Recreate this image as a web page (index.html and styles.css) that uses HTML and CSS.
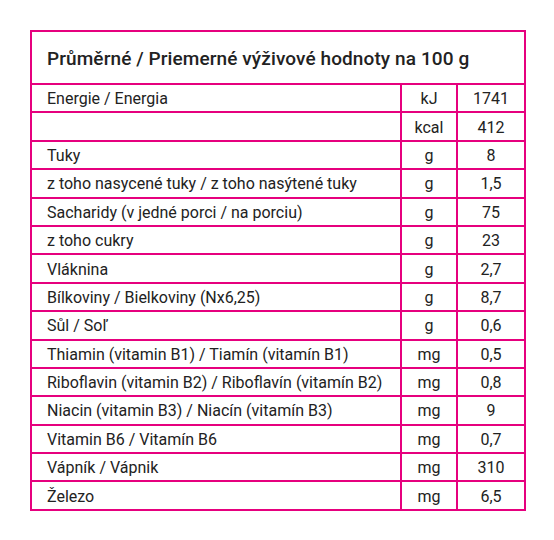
FILE: index.html
```html
<!DOCTYPE html>
<html lang="cs">
<head>
<meta charset="utf-8">
<title>Výživové hodnoty</title>
<link rel="stylesheet" href="styles.css">
</head>
<body>
<table class="nutri">
  <colgroup>
    <col class="c-name">
    <col class="c-unit">
    <col class="c-val">
  </colgroup>
  <thead>
    <tr class="head"><th colspan="3">Průměrné / Priemerné výživové hodnoty na 100 g</th></tr>
  </thead>
  <tbody>
    <tr><td class="name">Energie / Energia</td><td class="unit">kJ</td><td class="val">1741</td></tr>
    <tr><td class="name"></td><td class="unit">kcal</td><td class="val">412</td></tr>
    <tr><td class="name">Tuky</td><td class="unit">g</td><td class="val">8</td></tr>
    <tr><td class="name">z toho nasycené tuky / z toho nasýtené tuky</td><td class="unit">g</td><td class="val">1,5</td></tr>
    <tr><td class="name">Sacharidy (v jedné porci / na porciu)</td><td class="unit">g</td><td class="val">75</td></tr>
    <tr><td class="name">z toho cukry</td><td class="unit">g</td><td class="val">23</td></tr>
    <tr><td class="name">Vláknina</td><td class="unit">g</td><td class="val">2,7</td></tr>
    <tr><td class="name">Bílkoviny / Bielkoviny (Nx6,25)</td><td class="unit">g</td><td class="val">8,7</td></tr>
    <tr><td class="name">Sůl / Soľ</td><td class="unit">g</td><td class="val">0,6</td></tr>
    <tr><td class="name">Thiamin (vitamin B1) / Tiamín (vitamín B1)</td><td class="unit">mg</td><td class="val">0,5</td></tr>
    <tr><td class="name">Riboflavin (vitamin B2) / Riboflavín (vitamín B2)</td><td class="unit">mg</td><td class="val">0,8</td></tr>
    <tr><td class="name">Niacin (vitamin B3) / Niacín (vitamín B3)</td><td class="unit">mg</td><td class="val">9</td></tr>
    <tr><td class="name">Vitamin B6 / Vitamín B6</td><td class="unit">mg</td><td class="val">0,7</td></tr>
    <tr><td class="name">Vápník / Vápnik</td><td class="unit">mg</td><td class="val">310</td></tr>
    <tr><td class="name">Železo</td><td class="unit">mg</td><td class="val">6,5</td></tr>
  </tbody>
</table>
</body>
</html>
```

FILE: styles.css
```css
html, body {
  margin: 0;
  padding: 0;
  background: #ffffff;
}
body {
  padding: 30px 0 0 30px;
  font-family: Roboto, "Liberation Sans", sans-serif;
  color: #222222;
}
.nutri {
  border-collapse: collapse;
  table-layout: fixed;
  width: 494px;
}
.c-name { width: 370px; }
.c-unit { width: 56px; }
.c-val { width: 68px; }
.nutri th,
.nutri td {
  border: 2px solid #e6007e;
  padding: 0;
  white-space: nowrap;
}
.head th {
  height: 49px;
  padding-top: 2px;
  text-align: left;
  padding-left: 15px;
  font-size: 19px;
  font-weight: 500;
  letter-spacing: 0.1px;
}
.nutri td {
  height: 24.4px;
  padding-top: 2px;
  font-size: 16px;
  line-height: 18px;
}
.nutri td.name {
  padding-left: 15px;
}
.unit {
  text-align: center;
}
.val {
  text-align: center;
}
```
